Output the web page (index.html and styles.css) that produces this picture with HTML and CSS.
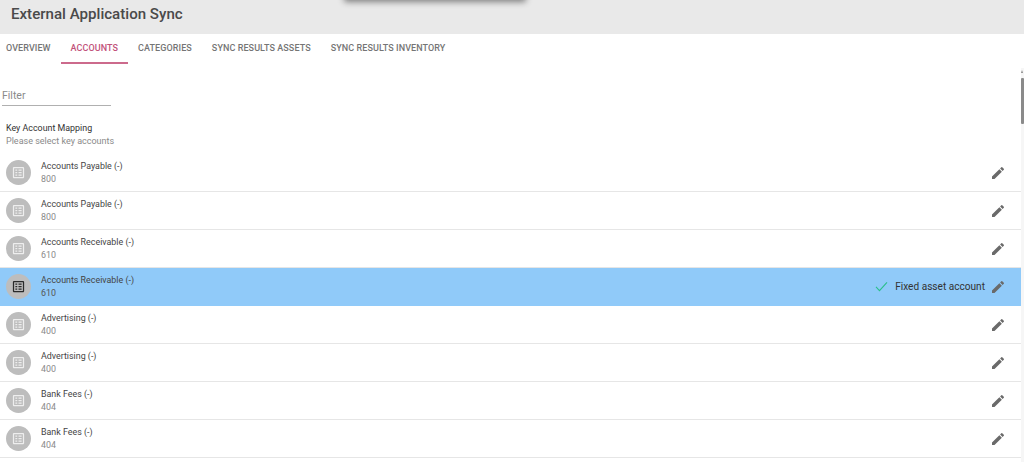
FILE: index.html
```html
<!DOCTYPE html>
<html lang="en">
<head>
<meta charset="utf-8">
<title>External Application Sync</title>
<link rel="stylesheet" href="styles.css">
</head>
<body>
<svg class="defs" width="0" height="0" aria-hidden="true">
  <symbol id="ledger" viewBox="0 0 24 24"><path d="M19 3H5c-1.1 0-2 .9-2 2v14c0 1.1.9 2 2 2h14c1.1 0 2-.9 2-2V5c0-1.100-.9-2-2-2zm0 16H5V5h14v14zM7 7h3v2H7V7zm0 4h3v2H7v-2zm0 4h3v2H7v-2zm5-8h5v2h-5V7zm0 4h5v2h-5v-2zm0 4h5v2h-5v-2z"/></symbol>
  <symbol id="pencil" viewBox="0 0 24 24"><path d="M3 17.250V21h3.750L17.810 9.940l-3.750-3.750L3 17.250zM20.710 7.040a1 1 0 0 0 0-1.410l-2.340-2.340a1 1 0 0 0-1.410 0l-1.830 1.830 3.750 3.750 1.830-1.830z"/></symbol>
</svg>
<header class="top"><h1>External Application Sync</h1><div class="overlay"></div></header>
<nav class="tabs">
  <a class="tab">OVERVIEW</a>
  <a class="tab active">ACCOUNTS</a>
  <a class="tab">CATEGORIES</a>
  <a class="tab">SYNC RESULTS ASSETS</a>
  <a class="tab">SYNC RESULTS INVENTORY</a>
</nav>
<main class="content">
  <div class="filter">Filter</div>
  <div class="heading"><div class="h-title">Key Account Mapping</div><div class="h-sub">Please select key accounts</div></div>
  <ul class="list">
    <li class="row"><span class="avatar"><svg class="ic"><use href="#ledger"/></svg></span><div class="txt"><div class="name">Accounts Payable (-)</div><div class="code">800</div></div><svg class="edit"><use href="#pencil"/></svg></li>
    <li class="row"><span class="avatar"><svg class="ic"><use href="#ledger"/></svg></span><div class="txt"><div class="name">Accounts Payable (-)</div><div class="code">800</div></div><svg class="edit"><use href="#pencil"/></svg></li>
    <li class="row"><span class="avatar"><svg class="ic"><use href="#ledger"/></svg></span><div class="txt"><div class="name">Accounts Receivable (-)</div><div class="code">610</div></div><svg class="edit"><use href="#pencil"/></svg></li>
    <li class="row selected"><span class="avatar"><svg class="ic"><use href="#ledger"/></svg></span><div class="txt"><div class="name">Accounts Receivable (-)</div><div class="code">610</div></div><svg class="check" viewBox="0 0 14 12"><path d="M1 6.500 4.800 10.500 13 1.500"/></svg><span class="tag">Fixed asset account</span><svg class="edit"><use href="#pencil"/></svg></li>
    <li class="row"><span class="avatar"><svg class="ic"><use href="#ledger"/></svg></span><div class="txt"><div class="name">Advertising (-)</div><div class="code">400</div></div><svg class="edit"><use href="#pencil"/></svg></li>
    <li class="row"><span class="avatar"><svg class="ic"><use href="#ledger"/></svg></span><div class="txt"><div class="name">Advertising (-)</div><div class="code">400</div></div><svg class="edit"><use href="#pencil"/></svg></li>
    <li class="row"><span class="avatar"><svg class="ic"><use href="#ledger"/></svg></span><div class="txt"><div class="name">Bank Fees (-)</div><div class="code">404</div></div><svg class="edit"><use href="#pencil"/></svg></li>
    <li class="row"><span class="avatar"><svg class="ic"><use href="#ledger"/></svg></span><div class="txt"><div class="name">Bank Fees (-)</div><div class="code">404</div></div><svg class="edit"><use href="#pencil"/></svg></li>
  </ul>
</main>
<div class="scrollbar"><div class="arrow"></div><div class="thumb"></div></div>
</body>
</html>
```
FILE: styles.css
```css
* { box-sizing: border-box; }
html, body { margin: 0; height: 462px; overflow: hidden; }
body { font-family: Roboto, "Liberation Sans", sans-serif; background: #fff; color: #444; position: relative; }
.defs { position: absolute; }
.top { height: 34px; background: #e9e9e9; padding: 5px 0 0 11px; }
.top h1 { margin: 0; font-size: 15.100px; line-height: 19px; font-weight: 500; color: #4a4a4a; }
.overlay { position: absolute; left: 344px; top: -12px; width: 182px; height: 12px; background: #fff; box-shadow: 0 2px 6px rgba(0,0,0,.45); border-radius: 2px; }
.tabs { display: flex; height: 30px; }
.tab { display: block; padding: 10px 10px 0; height: 30px; font-size: 9px; line-height: 9px; font-weight: 500; letter-spacing: .08px; color: #757575; white-space: nowrap; }
.tab:first-child { padding-left: 6px; }
.tab.active { color: #c2527a; border-bottom: 2px solid #cc6a8c; }
.content { width: 1021px; padding-top: 24px; }
.filter { width: 109px; height: 18px; margin-left: 2px; border-bottom: 1px solid #b0b0b0; font-size: 10.500px; line-height: 15px; color: #8a8a8a; }
.heading { padding: 16px 0 0 6px; height: 48px; }
.h-title { font-size: 8.900px; line-height: 13px; color: #333; }
.h-sub { font-size: 9px; line-height: 13px; color: #8a8a8a; }
.list { margin: 0; padding: 0; list-style: none; }
.row { display: flex; align-items: center; height: 38px; padding-left: 6px; padding-right: 16px; border-bottom: 1px solid #e6e6e6; }
.row.selected { background: #90caf9; border-bottom-color: #90caf9; }
.avatar { width: 25px; height: 25px; border-radius: 50%; background: #bdbdbd; display: flex; align-items: center; justify-content: center; flex: none; }
.ic { width: 15px; height: 15px; fill: #eee; }
.selected .ic { fill: #2a2a2a; }
.txt { margin-left: 10px; flex: 1; }
.name { font-size: 8.900px; line-height: 13px; color: #444; }
.code { font-size: 8.900px; line-height: 13px; color: #8a8a8a; }
.selected .code { color: #555; }
.edit { width: 16px; height: 16px; fill: #6a6a6a; flex: none; margin-right: -1px; }
.check { width: 13px; height: 11px; fill: none; stroke: #2bbf8a; stroke-width: 1.200; flex: none; margin-right: 7px; }
.tag { font-size: 10.100px; color: #333; margin-right: 5px; }
.scrollbar { position: absolute; right: 0; top: 68px; width: 3px; height: 394px; background: #f6f6f6; }
.arrow { width: 0; height: 0; margin-top: 2px; border-left: 1.500px solid transparent; border-right: 1.500px solid transparent; border-bottom: 3px solid #888; }
.thumb { margin-top: 5px; height: 46px; background: #8a8a8a; border-radius: 1px; }
```
